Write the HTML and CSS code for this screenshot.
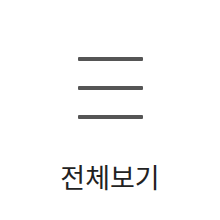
FILE: index.html
```html
<!DOCTYPE html>
<html lang="ko">
<head>
<meta charset="utf-8">
<link rel="stylesheet" href="styles.css">
</head>
<body>
<div class="menu-btn">
  <div class="burger">
    <span class="bar"></span>
    <span class="bar"></span>
    <span class="bar"></span>
  </div>
  <div class="label">전체보기</div>
</div>
</body>
</html>
```
FILE: styles.css
```css
html, body {
  margin: 0;
  padding: 0;
  background: #fff;
}
.menu-btn {
  width: 220px;
  height: 220px;
  display: flex;
  flex-direction: column;
  align-items: center;
  padding-top: 57px;
  box-sizing: border-box;
}
.burger {
  display: flex;
  flex-direction: column;
  gap: 25px;
}
.bar {
  display: block;
  width: 65px;
  height: 4px;
  border-radius: 1px;
  background: #555;
}
.label {
  margin-top: 40px;
  font-family: "Noto Sans CJK KR", "Noto Sans", sans-serif;
  font-size: 27px;
  line-height: 36px;
  color: #222;
}
```
